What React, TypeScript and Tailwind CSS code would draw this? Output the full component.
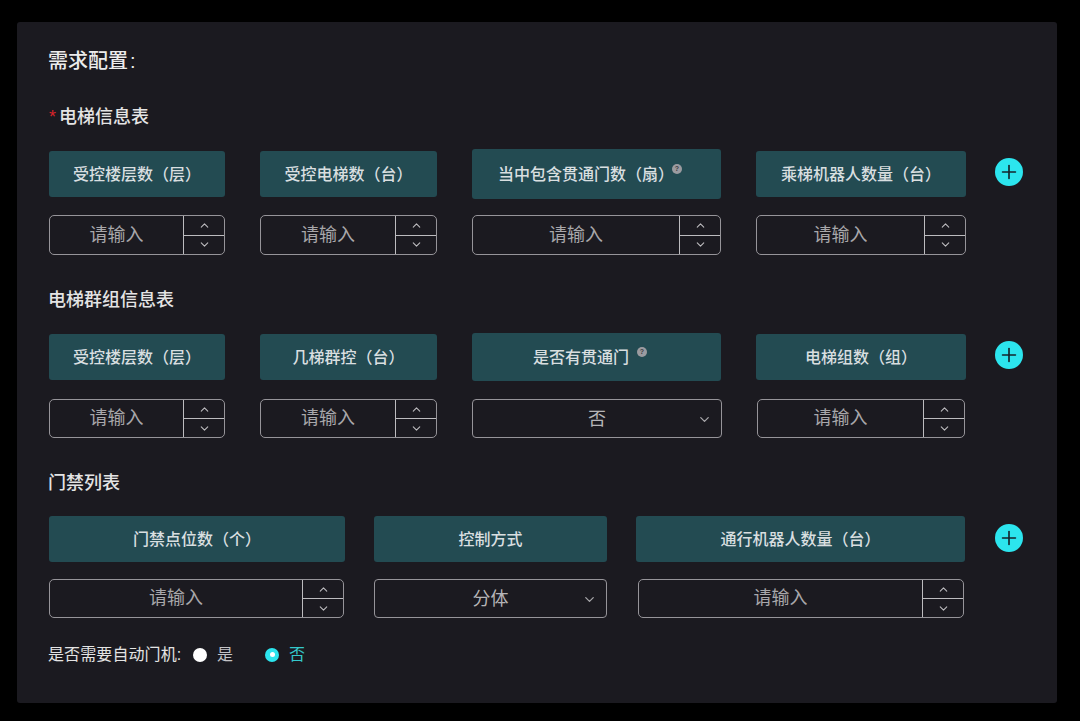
import { ChevronDown, ChevronUp, Plus } from "lucide-react"

const font = { fontFamily: '"Liberation Sans", "Noto Sans CJK SC", sans-serif' }

function Head({ text, tip, className = "" }: { text: string; tip?: string; className?: string }) {
  return (
    <div className={`flex h-[46px] items-center justify-center gap-[8px] rounded-[3px] bg-[#234b52] pt-px text-[16px] font-medium text-[#d9dfe0] ${className}`}>
      <span>{text}</span>
      {tip && (
        <span className={`mb-3 flex h-[10px] w-[10px] items-center justify-center rounded-full bg-[#9b9ba0] text-[7px] font-bold leading-none text-[#3c3c42] ${tip}`}>
          ?
        </span>
      )}
    </div>
  )
}

function NumberInput({ className = "" }: { className?: string }) {
  return (
    <div className={`flex h-10 rounded-[5px] border border-[#969499] ${className}`}>
      <div className="flex flex-1 items-center justify-center text-[18px] text-[#a8a7aa]">请输入</div>
      <div className="flex w-[41px] flex-col border-l border-[#bdbcbf] text-[#bdbcbf]">
        <div className="flex flex-1 items-center justify-center border-b border-[#bdbcbf]">
          <ChevronUp size={13} strokeWidth={2} />
        </div>
        <div className="flex flex-1 items-center justify-center">
          <ChevronDown size={13} strokeWidth={2} />
        </div>
      </div>
    </div>
  )
}

function SelectInput({ value, className = "" }: { value: string; className?: string }) {
  return (
    <div className={`grid h-10 grid-cols-[1fr_auto_1fr] items-center rounded-[4px] border border-[#969499] pt-px text-[18px] text-[#b5b4b7] ${className}`}>
      <span />
      <span>{value}</span>
      <ChevronDown size={15} strokeWidth={2} className="mr-[9px] justify-self-end text-[#a8a7aa]" />
    </div>
  )
}

function AddButton({ className = "" }: { className?: string }) {
  return (
    <div className={`flex h-7 w-7 items-center justify-center rounded-full bg-[#2ce5ee] text-[#14242c] ${className}`}>
      <Plus size={22} strokeWidth={1.8} />
    </div>
  )
}

export default function App() {
  return (
    <div className="h-[721px] w-[1080px] overflow-hidden bg-black pl-[17px] pt-[22px]" style={font}>
      <div className="h-[681px] w-[1040px] rounded-[3px] bg-[#1b1a20] pl-8 pt-6">
        {/* 需求配置 */}
        <h2 className="-ml-px h-7 pt-px text-[20px] font-medium leading-7 text-[#ececec]">
          需求配置<span className="ml-[2px]">:</span>
        </h2>

        <h3 className="mt-[29px] h-[26px] pt-px text-[18px] font-medium leading-[26px] text-[#e4e4e4]">
          <span className="mr-[3px] text-[#d8232a]">*</span>电梯信息表
        </h3>
        <div className="mt-[20px] grid grid-cols-[176px_177px_249px_210px_auto] items-center gap-x-[35px] gap-y-4">
          <Head text="受控楼层数（层）" />
          <Head text="受控电梯数（台）" />
          <Head text="当中包含贯通门数（扇）" tip="-ml-[10px]" className="h-[50px] pr-[13px]" />
          <Head text="乘梯机器人数量（台）" />
          <AddButton className="-ml-[6px] mb-1" />
          <NumberInput />
          <NumberInput />
          <NumberInput />
          <NumberInput />
        </div>

        <h3 className="-ml-px mt-[31px] h-[26px] pt-px text-[18px] font-medium leading-[26px] text-[#e4e4e4]">电梯群组信息表</h3>
        <div className="mt-[21px] grid grid-cols-[176px_177px_249px_210px_auto] items-center gap-x-[35px] gap-y-[18px]">
          <Head text="受控楼层数（层）" />
          <Head text="几梯群控（台）" />
          <Head text="是否有贯通门" tip="ml-0" className="h-[48px] pr-[13px]" />
          <Head text="电梯组数（组）" />
          <AddButton className="-ml-[6px] mb-1" />
          <NumberInput className="h-[39px]" />
          <NumberInput className="h-[39px]" />
          <SelectInput value="否" className="-mr-px h-[39px]" />
          <NumberInput className="mx-px h-[39px]" />
        </div>

        <h3 className="-ml-px mt-[31px] h-[26px] pt-px text-[18px] font-medium leading-[26px] text-[#e4e4e4]">门禁列表</h3>
        <div className="mt-[21px] grid grid-cols-[296px_233px_329px_auto] items-center gap-x-[29px] gap-y-[17px]">
          <Head text="门禁点位数（个）" />
          <Head text="控制方式" />
          <Head text="通行机器人数量（台）" />
          <AddButton className="ml-px mb-[2px]" />
          <NumberInput className="mr-px h-[39px]" />
          <SelectInput value="分体" className="h-[39px]" />
          <NumberInput className="ml-[2px] mr-px h-[39px]" />
        </div>

        <div className="mt-[24px] flex h-[24px] items-center pt-px text-[16px] text-[#e4e4e4]">
          <span className="-ml-px w-[145px] tracking-[0.1px]">是否需要自动门机:</span>
          <span className="h-[14px] w-[14px] rounded-full bg-white" />
          <span className="ml-[10px] text-[#c4c3c6]">是</span>
          <span className="ml-[32px] flex h-[14px] w-[14px] items-center justify-center rounded-full bg-[#2ce5ee]">
            <span className="h-[5px] w-[5px] rounded-full bg-white" />
          </span>
          <span className="ml-[10px] text-[#35c9cc]">否</span>
        </div>
      </div>
    </div>
  )
}
